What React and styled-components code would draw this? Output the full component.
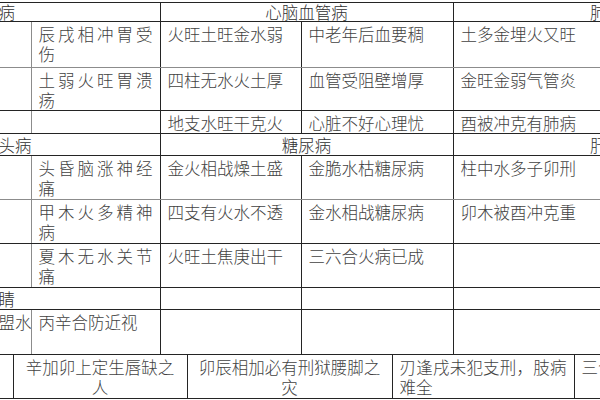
import styled, { createGlobalStyle } from "styled-components";

const DARK = "#242424";
const SOFT = "#8c8c8c";

const GlobalStyle = createGlobalStyle`
  html, body { margin: 0; padding: 0; background: #fff; }
  body { font-family: "Noto Sans CJK SC", "Noto Sans", sans-serif; }
`;

const Page = styled.div`
  width: 600px;
  height: 400px;
  overflow: hidden;
  padding-top: 2px;
  box-sizing: border-box;
  background: #fff;
`;

const Sheet = styled.table`
  border-collapse: collapse;
  table-layout: fixed;
  width: ${(p) => p.$width}px;
  margin-left: ${(p) => p.$shift}px;
  border-top: ${(p) => (p.$ruled ? `1px solid ${DARK}` : "none")};
  font-size: 16.5px;
  font-weight: 300;
  color: #424242;
`;

const Row = styled.tr`
  height: ${(p) => p.$h}px;
`;

const Cell = styled.td`
  padding: ${(p) => (p.$head ? "0" : "2px")} 7px 0 ${(p) => p.$padLeft ?? 7}px;
  vertical-align: ${(p) => (p.$head ? "middle" : "top")};
  line-height: ${(p) => (p.$head ? "18px" : "20px")};
  text-align: ${(p) => p.$align || "left"};
  text-justify: inter-character;
  white-space: ${(p) => (p.$nowrap ? "nowrap" : "normal")};
  overflow: hidden;
  color: ${(p) => (p.$head ? "#303030" : "inherit")};
  border-right: 1px solid ${(p) => (p.$softRight ? SOFT : DARK)};
  border-bottom: 1px solid ${(p) => (p.$softBottom ? SOFT : DARK)};
`;

const topCols = [51, 129, 141, 152, 307];
const bottomCols = [73, 174, 205, 182, 200];

function GroupHead({ h, left, middle, right }) {
  return (
    <Row $h={h}>
      <Cell $head colSpan={2} $padLeft={2}>{left}</Cell>
      <Cell $head colSpan={2} $align="center">{middle}</Cell>
      <Cell $head $align="center">{right}</Cell>
    </Row>
  );
}

function BodyRow({ h, items, soft }) {
  return (
    <Row $h={h}>
      <Cell $padLeft={2} $nowrap $softRight $softBottom={soft}>{items[0]}</Cell>
      <Cell $align="justify" $softBottom={soft}>{items[1]}</Cell>
      <Cell $softBottom={soft}>{items[2]}</Cell>
      <Cell $softBottom={soft}>{items[3]}</Cell>
      <Cell $softBottom={soft}>{items[4]}</Cell>
    </Row>
  );
}

export default function App() {
  return (
    <Page>
      <GlobalStyle />
      <Sheet $width={780} $shift={-20} $ruled>
        <colgroup>
          {topCols.map((w, i) => (
            <col key={i} style={{ width: w }} />
          ))}
        </colgroup>
        <tbody>
          <GroupHead h={19} left="胃病" middle="心脑血管病" right="肺病" />
          <BodyRow h={46} soft items={["", "辰戌相冲胃受伤", "火旺土旺金水弱", "中老年后血要稠", "土多金埋火又旺"]} />
          <BodyRow h={43} items={["", "土弱火旺胃溃疡", "四柱无水火土厚", "血管受阻壁增厚", "金旺金弱气管炎"]} />
          <BodyRow h={23} items={["", "", "地支水旺干克火", "心脏不好心理忧", "酉被冲克有肺病"]} />
          <GroupHead h={22} left="骨头病" middle="糖尿病" right="肝病" />
          <BodyRow h={44} soft items={["", "头昏脑涨神经痛", "金火相战燥土盛", "金脆水枯糖尿病", "柱中水多子卯刑"]} />
          <BodyRow h={44} items={["", "甲木火多精神病", "四支有火水不透", "金水相战糖尿病", "卯木被酉冲克重"]} />
          <BodyRow h={44} items={["", "夏木无水关节痛", "火旺土焦庚出干", "三六合火病已成", ""]} />
          <Row $h={22}>
            <Cell $head colSpan={2} $padLeft={2}>眼睛</Cell>
            <Cell $head />
            <Cell $head />
            <Cell $head />
          </Row>
          <BodyRow h={45} items={["遇盟水", "丙辛合防近视", "", "", ""]} />
        </tbody>
      </Sheet>
      <Sheet $width={834} $shift={-60}>
        <colgroup>
          {bottomCols.map((w, i) => (
            <col key={i} style={{ width: w }} />
          ))}
        </colgroup>
        <tbody>
          <Row $h={43}>
            <Cell />
            <Cell $align="center">辛加卯上定生唇缺之人</Cell>
            <Cell $align="center">卯辰相加必有刑狱腰脚之灾</Cell>
            <Cell $align="justify">刃逢戌未犯支刑，肢病难全</Cell>
            <Cell>三合会局病连身</Cell>
          </Row>
        </tbody>
      </Sheet>
    </Page>
  );
}
